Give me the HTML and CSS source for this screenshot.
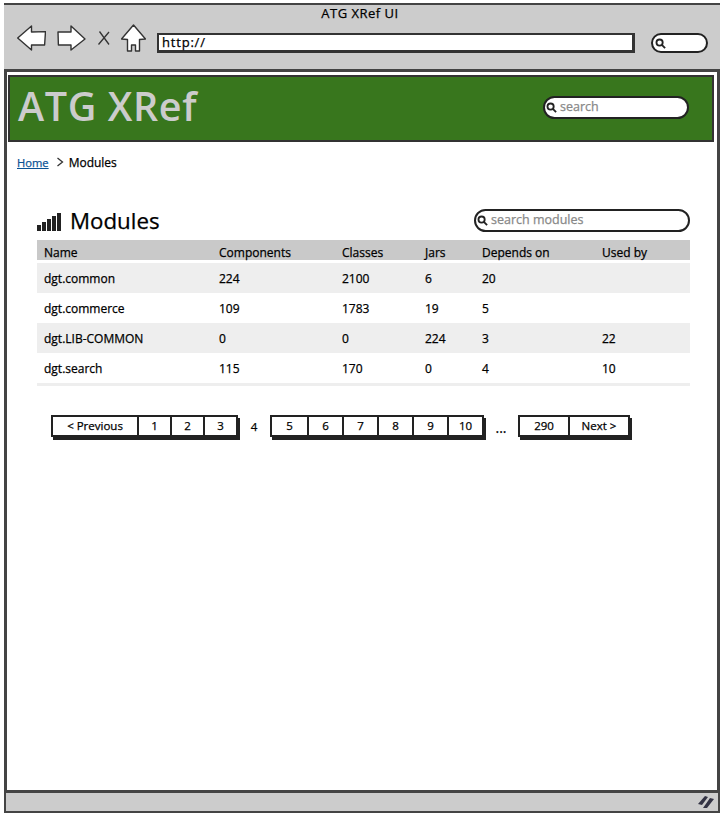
FILE: index.html
```html
<!DOCTYPE html>
<html lang="en">
<head>
    <meta charset="UTF-8">
    <meta name="viewport" content="width=device-width, initial-scale=1.0">
    <title>ATG XRef UI</title>
    <link rel="stylesheet" href="styles.css">
</head>
<body>
    <div class="window">
        <div class="toolbar">
            <div class="window-title">ATG XRef UI</div>
            <div class="nav-row">
                <svg class="nav-icon back-icon" viewBox="0 0 29 26"><path d="M0.7 13 L14.5 1 L14.5 7 L28.5 6.6 L27.6 20 L14.5 20 L14.5 25 Z"/></svg>
                <svg class="nav-icon forward-icon" viewBox="0 0 29 26"><path d="M1 7 L14 7 L14 1 L28 14 L14 25 L14 20 L1.4 20 Z"/></svg>
                <svg class="stop-icon" viewBox="0 0 12 14"><path d="M1.5 0.5 L11 13.5 M11 1 L0.5 13.5"/></svg>
                <svg class="nav-icon home-icon" viewBox="0 0 25 28"><path d="M12.5 1 L24.5 15 L18.5 15.5 L18.5 27 L14.5 27 L14.5 21 L10.5 21 L10.5 27 L6.5 27 L6.5 15.5 L0.5 15 Z"/></svg>
                <div class="url-box">http://</div>
                <div class="pill browser-search">
                    <svg class="lens" viewBox="0 0 12 12"><circle cx="5" cy="5" r="3.4"/><path d="M7.5 7.5 L11 11"/></svg>
                </div>
            </div>
        </div>
        <main class="page">
            <header class="banner">
                <div class="logo">ATG XRef</div>
                <div class="pill banner-search">
                    <svg class="lens" viewBox="0 0 12 12"><circle cx="5" cy="5" r="3.4"/><path d="M7.5 7.5 L11 11"/></svg>
                    <span class="placeholder">search</span>
                </div>
            </header>
            <nav class="breadcrumb">
                <a href="#">Home</a>
                <svg class="crumb-arrow" viewBox="0 0 8 10"><path d="M1.5 1 L6.5 5 L1.5 9"/></svg>
                <span>Modules</span>
            </nav>
            <section class="modules">
                <div class="modules-head">
                    <svg class="bars-icon" viewBox="0 0 24 18"><path d="M0 12h4v6H0zM5 9h4v9H5zM10 6h4v12h-4zM15 3h4v15h-4zM20 0h4v18h-4z"/></svg>
                    <h1>Modules</h1>
                    <div class="pill modules-search">
                        <svg class="lens" viewBox="0 0 12 12"><circle cx="5" cy="5" r="3.4"/><path d="M7.5 7.5 L11 11"/></svg>
                        <span class="placeholder">search modules</span>
                    </div>
                </div>
                <table class="module-table">
                    <colgroup>
                        <col class="col-name"><col class="col-comp"><col class="col-class"><col class="col-jars"><col class="col-deps"><col>
                    </colgroup>
                    <thead>
                        <tr><th>Name</th><th>Components</th><th>Classes</th><th>Jars</th><th>Depends on</th><th>Used by</th></tr>
                    </thead>
                    <tbody>
                        <tr><td>dgt.common</td><td>224</td><td>2100</td><td>6</td><td>20</td><td></td></tr>
                        <tr><td>dgt.commerce</td><td>109</td><td>1783</td><td>19</td><td>5</td><td></td></tr>
                        <tr><td>dgt.LIB-COMMON</td><td>0</td><td>0</td><td>224</td><td>3</td><td>22</td></tr>
                        <tr><td>dgt.search</td><td>115</td><td>170</td><td>0</td><td>4</td><td>10</td></tr>
                    </tbody>
                </table>
                <div class="pager">
                    <div class="page-group">
                        <a class="w-prev" href="#">&lt; Previous</a>
                        <a class="w-34" href="#">1</a>
                        <a class="w-34" href="#">2</a>
                        <a class="w-34" href="#">3</a>
                    </div>
                    <span class="current">4</span>
                    <div class="page-group">
                        <a class="w-36" href="#">5</a>
                        <a class="w-36" href="#">6</a>
                        <a class="w-36" href="#">7</a>
                        <a class="w-36" href="#">8</a>
                        <a class="w-36" href="#">9</a>
                        <a class="w-36" href="#">10</a>
                    </div>
                    <span class="dots">...</span>
                    <div class="page-group">
                        <a class="w-290" href="#">290</a>
                        <a class="w-next" href="#">Next &gt;</a>
                    </div>
                </div>
            </section>
        </main>
        <div class="statusbar">
            <svg class="resize-icon" viewBox="0 0 16 14"><path d="M0 9 L7 1 L10 2 L4 10 Z M5 13 L12 3 L16 4 L9 13 Z"/></svg>
        </div>
    </div>
</body>
</html>
```

FILE: styles.css
```css
* {
    margin: 0;
    padding: 0;
    box-sizing: border-box;
}
html, body {
    height: 100%;
}
body {
    font-family: "Open Sans", Arial, sans-serif;
    font-size: 12px;
    color: #000;
    -webkit-text-stroke: 0.25px;
    background: #fff;
    padding: 3px 3px 4px 4px;
}
.window {
    height: 100%;
    display: flex;
    flex-direction: column;
    border-left: 3px solid #444;
    border-right: 3px solid #444;
}
.toolbar {
    height: 69px;
    background: #ccc;
    border-top: 2px solid #444;
    border-bottom: 3px solid #444;
    margin: 0 -3px;
}
.window-title {
    text-align: center;
    height: 19px;
    line-height: 16px;
    padding-right: 4px;
    font-size: 13px;
    letter-spacing: 0.5px;
}
.nav-row {
    display: flex;
    align-items: center;
    height: 36px;
    padding-left: 13px;
    margin-top: 1px;
}
.nav-icon {
    margin-bottom: 11px;
}
.nav-icon path {
    fill: #fff;
    stroke: #333;
    stroke-width: 1.4;
    stroke-linejoin: round;
}
.back-icon, .forward-icon {
    width: 29px;
    height: 26px;
}
.forward-icon {
    margin-left: 11px;
}
.stop-icon {
    width: 12px;
    height: 14px;
    margin: 0 0 11px 12px;
    fill: none;
    stroke: #333;
    stroke-width: 1.3;
}
.home-icon {
    width: 25px;
    height: 28px;
    margin-left: 11px;
}
.url-box {
    width: 478px;
    height: 20px;
    margin-left: 11px;
    background: #fff;
    border: 3px solid #333;
    border-width: 2px 3px 3px 2px;
    font-size: 13px;
    line-height: 15px;
    padding-left: 3px;
    letter-spacing: 0.8px;
}
.pill {
    display: flex;
    align-items: center;
    background: #fff;
    border: 2px solid #222;
    border-radius: 12px;
}
.lens {
    flex: none;
    width: 11px;
    height: 11px;
    fill: none;
    stroke: #222;
    stroke-width: 2;
    margin-left: 1px;
}
.browser-search {
    width: 57px;
    height: 20px;
    margin-left: 16px;
    padding-left: 1px;
}
.page {
    flex: 1;
    padding: 3px 3px 0 1px;
}
.banner {
    height: 67px;
    display: flex;
    align-items: center;
    justify-content: space-between;
    background: #38761d;
    border: 2px solid #333;
    padding: 0 23px 0 8px;
}
.logo {
    font-size: 39.5px;
    font-weight: 600;
    color: #ccc;
    -webkit-text-stroke: 0;
    letter-spacing: 0.6px;
    line-height: 1;
    margin-bottom: 4px;
}
.banner-search {
    width: 146px;
    height: 23px;
    margin-bottom: 3px;
}
.placeholder {
    color: #888;
    font-size: 12.5px;
    margin-left: 3px;
    margin-bottom: 2px;
}
.breadcrumb {
    display: flex;
    align-items: center;
    height: 18px;
    margin: 11px 0 0 9px;
}
.breadcrumb a {
    color: #0b5394;
    font-size: 11.2px;
}
.crumb-arrow {
    width: 8px;
    height: 10px;
    margin: 0 5px 0 7px;
    fill: none;
    stroke: #333;
    stroke-width: 1.3;
}
.modules {
    padding: 0 24px 0 29px;
}
.modules-head {
    display: flex;
    align-items: center;
    height: 39px;
    margin-top: 30px;
}
.bars-icon {
    width: 24px;
    height: 18px;
    fill: #222;
    margin-top: 3px;
}
h1 {
    font-size: 22.3px;
    font-weight: 400;
    margin-left: 9px;
}
.modules-search {
    width: 216px;
    height: 23px;
    margin-left: auto;
}
.module-table {
    width: 653px;
    table-layout: fixed;
    border-collapse: separate;
    border-spacing: 0;
}
.col-name { width: 175px; }
.col-comp { width: 123px; }
.col-class { width: 83px; }
.col-jars { width: 57px; }
.col-deps { width: 120px; }
th, td {
    padding-left: 7px;
    text-align: left;
    font-weight: 400;
}
th {
    height: 23px;
    padding-top: 5px;
    background: #c9c9c9;
    background-clip: padding-box;
    border-bottom: 3px solid #fff;
    line-height: 1;
}
td {
    height: 30px;
}
tbody tr:nth-child(odd) {
    background: #eee;
}
tbody tr:last-child td {
    height: 33px;
    border-bottom: 3px solid #eee;
}
.pager {
    display: flex;
    align-items: center;
    margin: 29px 0 0 14px;
}
.page-group {
    display: flex;
    height: 22px;
    background: #fff;
    border: 2px solid #222;
    box-shadow: 2px 3px 0 #222;
}
.page-group a {
    color: #000;
    text-decoration: none;
    text-align: center;
    line-height: 18px;
    font-size: 11.5px;
    border-left: 2px solid #222;
}
.page-group a:first-child {
    border-left: 0;
}
.w-prev { width: 84px; }
.w-34 { width: 33px; }
.w-36 { width: 35px; }
.w-290 { width: 48px; }
.w-next { width: 60px; }
.current {
    width: 32px;
    text-align: center;
    font-size: 11.5px;
}
.dots {
    width: 34px;
    text-align: center;
    font-size: 14px;
    padding-top: 3px;
}
.statusbar {
    height: 23px;
    margin: 0 -3px;
    background: #ccc;
    border-top: 3px solid #444;
    border-bottom: 2px solid #444;
    border-left: 2px solid #444;
    border-right: 2px solid #444;
    display: flex;
    align-items: center;
    justify-content: flex-end;
    padding-right: 4px;
}
.resize-icon {
    width: 16px;
    height: 14px;
    fill: #334;
}
```
